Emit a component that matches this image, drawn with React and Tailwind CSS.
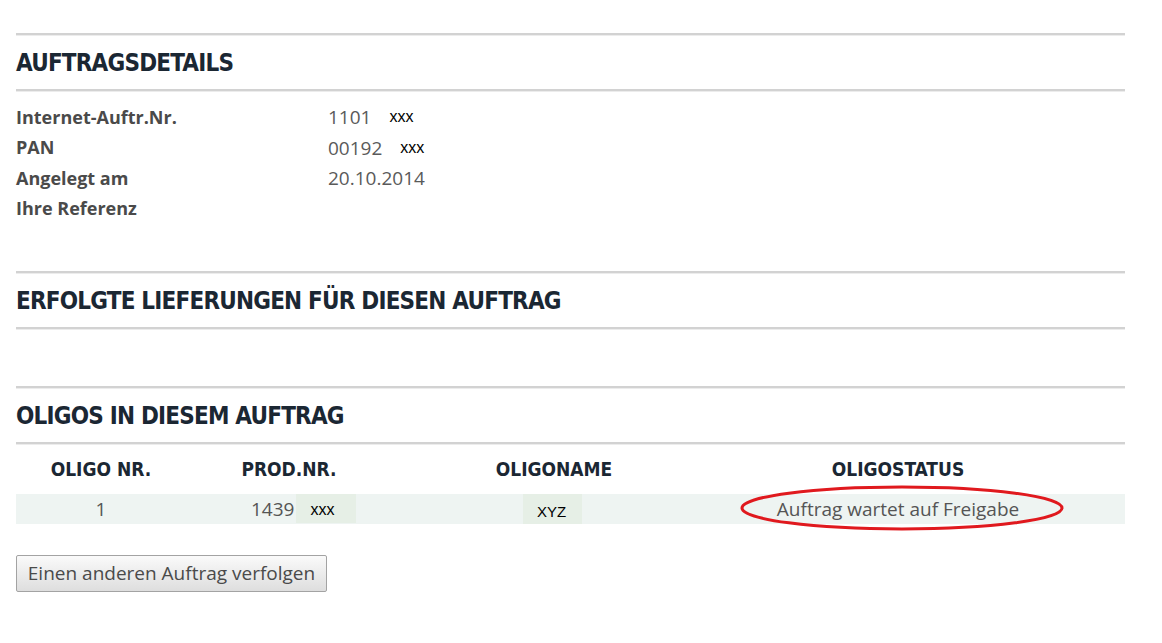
import React from 'react';

const heading = "font-['DejaVu_Sans_Condensed',sans-serif] font-bold text-[#1b2733]";
const body = "font-['Open_Sans',sans-serif]";
const mark = "font-['Liberation_Sans',sans-serif] text-black";

const Rule = () => <div className="h-[3px] border-t-2 border-[#d2d2d2] bg-[#ececec]" />;

const Section = ({ title }) => (
  <div>
    <Rule />
    <h2 className={`${heading} text-[24px] tracking-[-0.8px] leading-[54px] h-[53px]`}>{title}</h2>
    <Rule />
  </div>
);

const details = [
  ['Internet-Auftr.Nr.', '1101', 'xxx'],
  ['PAN', '00192', 'xxx'],
  ['Angelegt am', '20.10.2014', null],
  ['Ihre Referenz', '', null],
];

export default function App() {
  return (
    <div className="bg-white min-h-[643px] w-[1162px] pt-[33px]">
      <div className="ml-[16px] w-[1109px]">
        <Section title="AUFTRAGSDETAILS" />

        {/* Details */}
        <div className={`${body} text-[19px] pt-[10px] pb-[47px]`}>
          {details.map(([label, value, extra]) => (
            <div key={label} className="flex h-[30.5px] items-center">
              <div className="w-[312px] font-bold text-[18px] text-[#4a4a4a]">{label}</div>
              <div className="text-[#5a5a5a] flex items-center">
                {value}
                {extra && <span className={`${mark} ml-[18px] text-[16px]`}>{extra}</span>}
              </div>
            </div>
          ))}
        </div>

        <Section title="ERFOLGTE LIEFERUNGEN FÜR DIESEN AUFTRAG" />
        <div className="h-[56px]" />
        <Section title="OLIGOS IN DIESEM AUFTRAG" />

        {/* Oligo table */}
        <div className="relative">
          <div className={`${heading} text-[19px] flex h-[49px] items-center font-semibold`}>
            <div className="w-[170px] text-center">OLIGO NR.</div>
            <div className="w-[206px] text-center">PROD.NR.</div>
            <div className="w-[324px] text-center">OLIGONAME</div>
            <div className="w-[364px] text-center">OLIGOSTATUS</div>
          </div>
          <div className={`${body} text-[19px] text-[#555] flex h-[30px] items-center bg-[#eef4f2]`}>
            <div className="w-[170px] text-center">1</div>
            <div className="w-[206px] flex items-center h-full">
              <span className="ml-[65px]">1439</span>
              <span className={`${mark} ml-[2px] h-[29px] -mt-[2px] w-[60px] bg-[#e6efe6] text-[16px] flex items-center pt-[3px] pl-[14px]`}>xxx</span>
            </div>
            <div className="w-[324px] h-full flex items-center">
              <span className={`${mark} ml-[131px] h-full w-[59px] bg-[#e6efe6] text-[15px] flex items-end pb-[1px] pl-[14px]`}>XYZ</span>
            </div>
            <div className="w-[364px] text-center">Auftrag wartet auf Freigabe</div>
          </div>
          <svg className="absolute left-[724px] top-[40px]" width="324" height="46" viewBox="0 0 324 46">
            <ellipse cx="162" cy="23" rx="160" ry="21" fill="none" stroke="#e0191e" strokeWidth="3" />
          </svg>
        </div>

        <button className={`${body} mt-[31px] h-[37px] w-[311px] border border-[#a3a3a3] rounded-[2px] bg-gradient-to-b from-[#fafafa] to-[#dedede] text-[19px] text-[#4a4a4a]`}>
          Einen anderen Auftrag verfolgen
        </button>
      </div>
    </div>
  );
}
